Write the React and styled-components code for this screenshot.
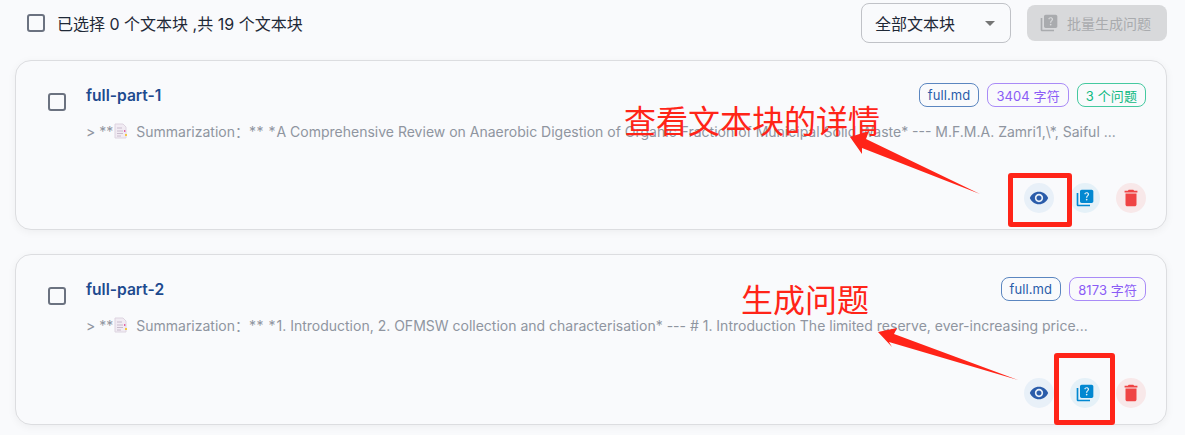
import React from "react"
import styled, { createGlobalStyle } from "styled-components"
import { MdVisibility, MdQuiz, MdDelete, MdArrowDropDown } from "react-icons/md"

const fontStack = `Inter, "Noto Sans CJK SC", sans-serif`

const GlobalStyle = createGlobalStyle`
  html, body {
    margin: 0;
    padding: 0;
    height: 435px;
    overflow: hidden;
    background: #f9fafc;
    font-family: ${fontStack};
  }
`

const chunks = [
  {
    name: "full-part-1",
    height: 170,
    text: "A Comprehensive Review on Anaerobic Digestion of Organic Fraction of Municipal Solid Waste* --- M.F.M.A. Zamri1,\\*, Saiful ...",
    chips: [
      { label: "full.md", tone: "blue" },
      { label: "3404 字符", tone: "purple" },
      { label: "3 个问题", tone: "green" },
    ],
  },
  {
    name: "full-part-2",
    height: 171,
    text: "1. Introduction, 2. OFMSW collection and characterisation* --- # 1. Introduction The limited reserve, ever-increasing price...",
    chips: [
      { label: "full.md", tone: "blue" },
      { label: "8173 字符", tone: "purple" },
    ],
  },
]

const tones = {
  blue: { border: "#5b86c0", text: "#2a5caa" },
  purple: { border: "#a98bf7", text: "#8b5cf6" },
  green: { border: "#45c9a0", text: "#10b981" },
}

const MemoIcon = () => (
  <svg width="14" height="16" viewBox="0 0 14 16" style={{ margin: "0 8px 0 1px", flexShrink: 0 }}>
    <path d="M1 1h8l3 3v11H1z" fill="#f1ebf3" stroke="#ddd4e0" strokeWidth="1" />
    <path d="M3 5h5M3 8h6M3 10.5h6M3 13h4" stroke="#c9bccd" strokeWidth="1" />
    <path d="M10 7l2 1-2 1z" fill="#e0348a" />
    <path d="M11 11h2v2h-2z" fill="#f5c542" />
  </svg>
)

const App = () => (
  <Page>
    <GlobalStyle />
    <Toolbar>
      <SelectAll>
        <CheckBox />
        <SelectText>已选择 0 个文本块 ,共 19 个文本块</SelectText>
      </SelectAll>
      <Dropdown>
        全部文本块
        <DropdownArrow />
      </Dropdown>
      <BatchButton>
        <MdQuiz size={20} />
        批量生成问题
      </BatchButton>
    </Toolbar>

    <CardList>
      {chunks.map((chunk) => (
        <Card key={chunk.name} $height={chunk.height}>
          <CardTop>
            <CardCheck />
            <CardTitle>{chunk.name}</CardTitle>
            <Chips>
              {chunk.chips.map((chip) => (
                <Chip key={chip.label} $tone={chip.tone}>{chip.label}</Chip>
              ))}
            </Chips>
          </CardTop>
          <Summary>
            &gt; **
            <MemoIcon />
            Summarization：<Stars>** *</Stars>{chunk.text}
          </Summary>
          <Actions>
            <ActionButton $bg="#e8f0f8" $color="#2a5caa"><MdVisibility size={20} /></ActionButton>
            <ActionButton $bg="#e5f1f8" $color="#0288d1"><MdQuiz size={20} /></ActionButton>
            <ActionButton $bg="#f8e8e9" $color="#ef4444"><MdDelete size={22} /></ActionButton>
          </Actions>
        </Card>
      ))}
    </CardList>

    {/* red notes drawn over the screenshot */}
    <NoteLabel $left={624} $top={96}>查看文本块的详情</NoteLabel>
    <NoteLabel $left={741} $top={275}>生成问题</NoteLabel>
    <NoteBox $left={1008} $top={173} $width={64} $height={54} />
    <NoteBox $left={1054} $top={353} $width={61} $height={72} />
    <NoteArrows viewBox="0 0 1185 435">
      <polygon points="850,137 869,131 866,139 980,194 862,148 862,154" />
      <polygon points="878,332 897,328 894,334 1018,380 889,342 892,347" />
    </NoteArrows>
  </Page>
)

export default App

const Page = styled.div`
  position: relative;
  width: 1185px;
  height: 435px;
  overflow: hidden;
  padding: 3px 18px 0 15px;
  box-sizing: border-box;
`

const Toolbar = styled.div`
  display: flex;
  align-items: center;
  height: 40px;
  margin-bottom: 17px;
`

const SelectAll = styled.div`
  display: flex;
  align-items: center;
  flex: 1;
  padding-left: 12px;
  gap: 12px;
`

const CheckBox = styled.span`
  width: 18px;
  height: 18px;
  box-sizing: border-box;
  border: 2px solid #6b7280;
  border-radius: 3px;
`

const SelectText = styled.span`
  font-size: 16px;
  color: #1f2937;
`

const Dropdown = styled.div`
  width: 150px;
  height: 40px;
  box-sizing: border-box;
  display: flex;
  align-items: center;
  justify-content: space-between;
  padding: 0 8px 0 13px;
  border: 1px solid #c0c2c7;
  border-radius: 8px;
  font-size: 16px;
  color: #1f2937;
`

const DropdownArrow = styled(MdArrowDropDown)`
  width: 24px;
  height: 24px;
  color: #757575;
`

const BatchButton = styled.div`
  width: 140px;
  height: 36px;
  margin-left: 16px;
  padding-right: 4px;
  box-sizing: border-box;
  display: flex;
  align-items: center;
  justify-content: center;
  gap: 8px;
  background: #d8d9db;
  border-radius: 8px;
  font-size: 14px;
  color: #a9abae;
`

const CardList = styled.div`
  display: flex;
  flex-direction: column;
  gap: 24px;
`

const Card = styled.div`
  box-sizing: border-box;
  height: ${(p) => p.$height}px;
  padding: 22px 20px 16px 32px;
  display: flex;
  flex-direction: column;
  background: #f9fafc;
  border: 1px solid #dcdde0;
  border-radius: 16px;
  box-shadow: 0 2px 8px rgba(0, 0, 0, 0.05);
`

const CardTop = styled.div`
  display: flex;
  align-items: flex-start;
  height: 28px;
`

const CardCheck = styled(CheckBox)`
  margin-top: 10px;
  margin-right: 20px;
  flex-shrink: 0;
`

const CardTitle = styled.div`
  flex: 1;
  margin-top: 3px;
  font-size: 15.6px;
  font-weight: 600;
  color: #1e4a8f;
`

const Chips = styled.div`
  display: flex;
  gap: 8px;
`

const Chip = styled.span`
  height: 24px;
  box-sizing: border-box;
  display: flex;
  align-items: center;
  padding: 0 8px;
  border: 1px solid ${(p) => tones[p.$tone].border};
  border-radius: 8px;
  font-size: 13px;
  letter-spacing: 0.1px;
  color: ${(p) => tones[p.$tone].text};
`

const Summary = styled.div`
  display: flex;
  align-items: center;
  margin: 10px 0 0 38px;
  font-size: 14px;
  white-space: pre;
  color: #8f95a0;
`

const Stars = styled.span`
  letter-spacing: 0.5px;
  margin-right: 0.5px;
`

const Actions = styled.div`
  margin-top: auto;
  display: flex;
  justify-content: flex-end;
  gap: 16px;
`

const ActionButton = styled.span`
  width: 30px;
  height: 30px;
  border-radius: 50%;
  display: flex;
  align-items: center;
  justify-content: center;
  background: ${(p) => p.$bg};
  color: ${(p) => p.$color};
`

const NoteLabel = styled.div`
  position: absolute;
  left: ${(p) => p.$left}px;
  top: ${(p) => p.$top}px;
  font-family: "Noto Sans CJK SC", sans-serif;
  font-size: 32px;
  line-height: 46px;
  color: #ff2418;
  white-space: nowrap;
`

const NoteBox = styled.div`
  position: absolute;
  left: ${(p) => p.$left}px;
  top: ${(p) => p.$top}px;
  width: ${(p) => p.$width}px;
  height: ${(p) => p.$height}px;
  box-sizing: border-box;
  border: 5px solid #ff2418;
  border-radius: 3px;
`

const NoteArrows = styled.svg`
  position: absolute;
  left: 0;
  top: 0;
  width: 1185px;
  height: 435px;
  pointer-events: none;
  fill: #ff2418;
`
